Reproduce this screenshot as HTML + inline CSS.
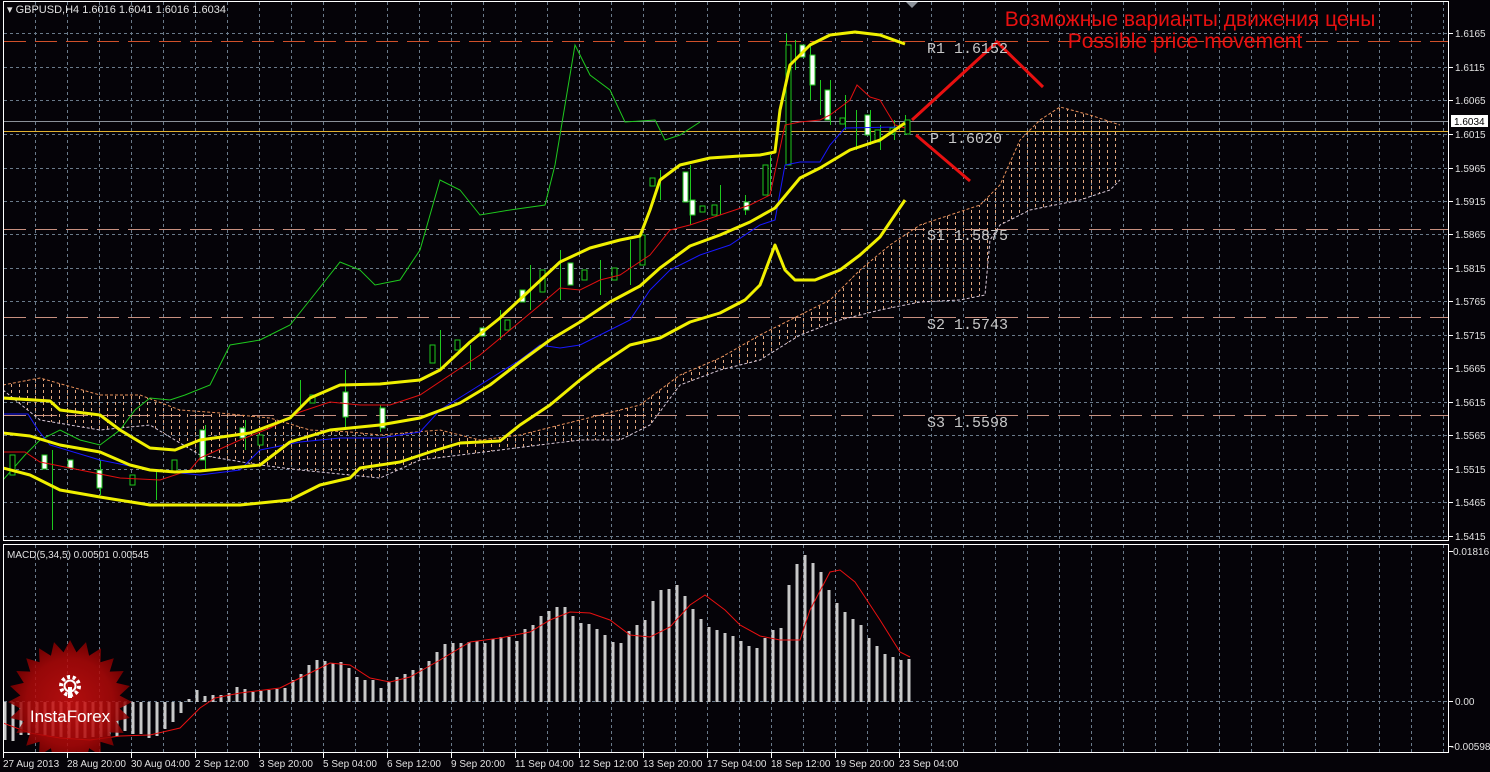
<!DOCTYPE html>
<html><head><meta charset="utf-8"><style>
html,body{margin:0;padding:0;background:#000;}
body{width:1490px;height:772px;overflow:hidden;}
svg{display:block;}
text{font-family:"Liberation Sans",sans-serif;}
text.mono{font-family:"Liberation Mono",monospace;}
</style></head><body>
<svg width="1490" height="772" viewBox="0 0 1490 772" xmlns="http://www.w3.org/2000/svg">
<defs>
<pattern id="hatch" width="8" height="6" patternUnits="userSpaceOnUse">
<rect x="3" y="0" width="1" height="3" fill="#e0a880"/>
</pattern>
<radialGradient id="lg" cx="0.5" cy="0.5" r="0.5">
<stop offset="0" stop-color="#d01010"/><stop offset="0.7" stop-color="#b00808"/><stop offset="1" stop-color="#800000"/>
</radialGradient>
<clipPath id="mainclip"><rect x="4" y="2" width="1444" height="538"/></clipPath>
<clipPath id="macdclip"><rect x="4" y="545" width="1444" height="207"/></clipPath>
</defs>
<rect width="1490" height="772" fill="#050308"/>
<g stroke="#6a7a8a" stroke-width="1" stroke-dasharray="3,3">
<path d="M4 33.5H1448M4 67.5H1448M4 100.5H1448M4 134.5H1448M4 168.5H1448M4 201.5H1448M4 234.5H1448M4 268.5H1448M4 301.5H1448M4 335.5H1448M4 368.5H1448M4 402.5H1448M4 435.5H1448M4 469.5H1448M4 502.5H1448M4 536.5H1448"/>
<path d="M4 701.5H1448"/>
<path d="M35.5 2V540M67.5 2V540M99.5 2V540M131.5 2V540M163.5 2V540M195.5 2V540M227.5 2V540M259.5 2V540M291.5 2V540M323.5 2V540M355.5 2V540M387.5 2V540M419.5 2V540M451.5 2V540M483.5 2V540M515.5 2V540M547.5 2V540M579.5 2V540M611.5 2V540M643.5 2V540M675.5 2V540M707.5 2V540M739.5 2V540M771.5 2V540M803.5 2V540M835.5 2V540M867.5 2V540M899.5 2V540M931.5 2V540M963.5 2V540M995.5 2V540M1027.5 2V540M1059.5 2V540M1091.5 2V540M1123.5 2V540M1155.5 2V540M1187.5 2V540M1219.5 2V540M1251.5 2V540M1283.5 2V540M1315.5 2V540M1347.5 2V540M1379.5 2V540M1411.5 2V540M1443.5 2V540"/>
<path d="M35.5 545V752M67.5 545V752M99.5 545V752M131.5 545V752M163.5 545V752M195.5 545V752M227.5 545V752M259.5 545V752M291.5 545V752M323.5 545V752M355.5 545V752M387.5 545V752M419.5 545V752M451.5 545V752M483.5 545V752M515.5 545V752M547.5 545V752M579.5 545V752M611.5 545V752M643.5 545V752M675.5 545V752M707.5 545V752M739.5 545V752M771.5 545V752M803.5 545V752M835.5 545V752M867.5 545V752M899.5 545V752M931.5 545V752M963.5 545V752M995.5 545V752M1027.5 545V752M1059.5 545V752M1091.5 545V752M1123.5 545V752M1155.5 545V752M1187.5 545V752M1219.5 545V752M1251.5 545V752M1283.5 545V752M1315.5 545V752M1347.5 545V752M1379.5 545V752M1411.5 545V752M1443.5 545V752"/>
</g>
<g clip-path="url(#mainclip)">
<g stroke-dasharray="22,9" stroke-width="1">
<path d="M4 41.5H1448" stroke="#d0502a"/>
<path d="M4 229.5H1448" stroke="#c89080"/>
<path d="M4 317.5H1448" stroke="#c89080"/>
<path d="M4 415.5H1448" stroke="#c89080"/>
</g>
<path d="M4 121.5H1448" stroke="#8a9098" stroke-width="1"/>
<path d="M4 131.5H1448" stroke="#e0b030" stroke-width="1"/>
<polygon fill="url(#hatch)" points="3,385 40,378 100,395 140,395 180,410 220,413 270,418 310,430 350,432 380,435 440,430 480,440 520,435 560,425 600,415 640,405 680,375 720,358 760,335 790,320 830,300 860,270 890,245 920,225 950,215 980,205 1000,185 1020,140 1040,120 1060,107 1090,115 1120,125 1120,180 1110,190 1080,200 1030,210 1000,225 990,240 985,295 960,300 920,302 880,310 840,320 800,335 760,360 720,370 680,385 650,425 620,440 580,440 540,445 500,450 460,455 420,460 380,478 350,475 300,470 260,465 200,455 150,425 100,430 40,420 3,390"/>
<polyline fill="none" stroke="#e8905a" stroke-width="1" stroke-dasharray="3,2" points="3,385 40,378 100,395 140,395 180,410 220,413 270,418 310,430 350,432 380,435 440,430 480,440 520,435 560,425 600,415 640,405 680,375 720,358 760,335 790,320 830,300 860,270 890,245 920,225 950,215 980,205 1000,185 1020,140 1040,120 1060,107 1090,115 1120,125"/>
<polyline fill="none" stroke="#d8c8d8" stroke-width="1" stroke-dasharray="3,2" points="3,390 40,420 100,430 150,425 200,455 260,465 300,470 350,475 380,478 420,460 460,455 500,450 540,445 580,440 620,440 650,425 680,385 720,370 760,360 800,335 840,320 880,310 920,302 960,300 985,295 990,240 1000,225 1030,210 1080,200 1110,190 1120,180"/>
<polyline fill="none" stroke="#1ec81e" stroke-width="1" points="3,480 25,455 40,440 60,430 80,440 100,445 120,430 135,410 150,398 170,400 185,395 210,385 230,345 260,340 290,325 310,300 340,262 360,270 375,285 400,280 420,250 440,180 460,190 480,215 510,210 545,205 555,165 575,45 590,75 610,90 625,122 655,120 665,140 680,135 700,122"/>
<g stroke="#1ec81e" stroke-width="1">
<path d="M52.5 450V530M100.5 460V495M156.5 470V500M205.5 425V470M245.5 420V450M300.5 380V410M345.5 370V430M380.5 405V432M440.5 330V370M470.5 345V370M500.5 310V340M530.5 265V310M560.5 250V300M600.5 260V295M630.5 240V285M660.5 170V200M690.5 165V225M720.5 185V215M745.5 195V215M770.5 155V190M786.5 33V160M795.5 40V70M810.5 45V100M820.5 80V115M830.5 80V125M845.5 95V130M856.5 110V150M870.5 110V145M880.5 125V150M894.5 120V140M905.5 115V135"/>
</g>
<g fill="#fff" stroke="#1ec81e" stroke-width="1">
<rect x="42" y="455" width="5" height="14"/><rect x="68" y="460" width="5" height="8"/><rect x="97" y="470" width="5" height="18"/><rect x="200" y="430" width="5" height="30"/><rect x="240" y="428" width="5" height="10"/><rect x="343" y="392" width="5" height="25"/><rect x="380" y="408" width="5" height="20"/><rect x="480" y="328" width="5" height="8"/><rect x="520" y="290" width="5" height="12"/><rect x="568" y="263" width="5" height="22"/><rect x="683" y="172" width="5" height="30"/><rect x="690" y="200" width="5" height="15"/><rect x="744" y="202" width="5" height="8"/><rect x="800" y="45" width="5" height="12"/><rect x="810" y="55" width="5" height="30"/><rect x="825" y="90" width="5" height="30"/><rect x="865" y="115" width="5" height="20"/>
</g>
<g fill="#000" stroke="#1ec81e" stroke-width="1">
<rect x="10" y="455" width="5" height="20"/><rect x="130" y="475" width="5" height="10"/><rect x="172" y="460" width="5" height="12"/><rect x="258" y="435" width="5" height="10"/><rect x="310" y="395" width="5" height="8"/><rect x="430" y="345" width="5" height="18"/><rect x="455" y="340" width="5" height="10"/><rect x="505" y="320" width="5" height="10"/><rect x="540" y="270" width="5" height="22"/><rect x="582" y="270" width="5" height="10"/><rect x="612" y="268" width="5" height="12"/><rect x="640" y="235" width="5" height="30"/><rect x="650" y="178" width="5" height="8"/><rect x="700" y="206" width="5" height="6"/><rect x="712" y="205" width="5" height="10"/><rect x="763" y="165" width="5" height="30"/><rect x="786" y="45" width="5" height="120"/><rect x="840" y="118" width="5" height="6"/><rect x="875" y="130" width="5" height="12"/><rect x="890" y="128" width="5" height="6"/><rect x="905" y="120" width="5" height="14"/>
</g>
<polyline fill="none" stroke="#1818ff" stroke-width="1" points="3,414 28,414 38,430 50,445 100,460 150,470 200,475 240,470 260,450 300,442 340,438 380,438 420,432 440,410 480,385 520,360 540,345 560,348 580,345 600,335 630,320 650,290 670,270 700,255 730,245 760,225 775,220 785,165 800,162 820,162 830,145 845,128 900,127"/>
<polyline fill="none" stroke="#e01010" stroke-width="1" points="3,452 25,452 40,462 80,470 120,478 160,480 190,470 200,458 240,440 270,428 300,412 330,402 360,405 390,405 420,395 450,375 480,355 510,330 540,305 560,288 580,290 600,280 620,275 650,255 670,230 690,225 720,215 750,205 770,195 785,125 800,122 820,120 830,115 850,100 857,85 870,97 880,100 895,125 905,128"/>
<g fill="none" stroke="#f0f000" stroke-width="3" stroke-linejoin="round">
<polyline points="3,398 50,401 60,410 100,415 120,430 150,448 175,450 200,440 250,433 290,418 310,398 340,385 380,384 420,380 440,370 470,342 500,318 530,290 560,262 590,248 620,240 640,236 650,210 660,180 680,165 710,158 740,156 760,155 775,152 780,110 790,65 810,45 830,35 855,32 880,35 905,44"/>
<polyline points="3,433 30,436 60,445 100,452 130,465 150,470 175,472 200,471 260,465 290,442 330,430 380,425 420,418 460,403 490,385 520,362 550,340 580,322 610,302 640,286 660,268 690,246 720,235 750,222 775,208 800,178 820,168 850,150 880,140 905,123"/>
<polyline points="3,468 30,475 60,490 100,497 150,505 200,505 240,505 290,500 320,485 350,478 360,468 400,462 430,452 460,443 500,441 520,425 550,405 580,380 600,365 630,345 660,338 690,322 720,313 745,300 760,285 775,245 785,270 795,280 815,280 840,270 860,255 880,237 905,200"/>
</g>
<g stroke="#e81010" stroke-width="3" fill="none">
<polyline points="912,120 997,42 1043,87"/>
<line x1="916" y1="135" x2="970" y2="181"/>
</g>
<g font-size="15" fill="#c8c8c8">
<text class="mono" x="927" y="53">R1 1.6152</text>
<text class="mono" x="930" y="143">P 1.6020</text>
<text class="mono" x="927" y="240">S1 1.5875</text>
<text class="mono" x="927" y="329">S2 1.5743</text>
<text class="mono" x="927" y="427">S3 1.5598</text>
</g>
<text x="1190" y="26" font-size="21" fill="#e81010" text-anchor="middle">Возможные варианты движения цены</text>
<text x="1185" y="48" font-size="21" fill="#e81010" text-anchor="middle">Possible price movement</text>
</g>
<polygon points="906,2 918,2 912,8" fill="#8a9098"/>
<g clip-path="url(#macdclip)">
<g stroke="#c8c8c8" stroke-width="3">
<path d="M5 702V740M13 702V741M21 702V735M29 702V735M37 702V733M45 702V735M53 702V736M61 702V737M69 702V738M77 702V738M85 702V738M93 702V737M101 702V737M109 702V736M117 702V736M125 702V731M133 702V734M141 702V734M149 702V738M157 702V736M165 702V729M173 702V722M181 702V713M189 702V699M197 702V690M205 702V696M213 702V695M221 702V695M229 702V693M237 702V687M245 702V689M253 702V692M261 702V691M269 702V690M277 702V689M285 702V688M293 702V680M301 702V674M309 702V665M317 702V660M325 702V661M333 702V663M341 702V662M349 702V668M357 702V677M365 702V680M373 702V680M381 702V688M389 702V682M397 702V677M405 702V674M413 702V670M421 702V668M429 702V661M437 702V652M445 702V644M453 702V643M461 702V643M469 702V642M477 702V641M485 702V643M493 702V639M501 702V637M509 702V637M517 702V641M525 702V629M533 702V625M541 702V616M549 702V611M557 702V607M565 702V607M573 702V616M581 702V623M589 702V624M597 702V629M605 702V635M613 702V642M621 702V643M629 702V631M637 702V625M645 702V620M653 702V601M661 702V590M669 702V589M677 702V585M685 702V596M693 702V609M701 702V619M709 702V627M717 702V630M725 702V633M733 702V636M741 702V641M749 702V646M757 702V648M765 702V638M773 702V630M781 702V628M789 702V585M797 702V564M805 702V555M813 702V563M821 702V572M829 702V590M837 702V603M845 702V612M853 702V619M861 702V625M869 702V638M877 702V646M885 702V654M893 702V657M901 702V660M909 702V659"/>
</g>
<polyline fill="none" stroke="#e81010" stroke-width="1" points="3,723 30,733 60,738 90,740 120,736 150,735 180,728 200,708 215,698 240,693 280,688 300,678 330,663 350,665 370,678 390,682 410,677 440,660 470,642 500,638 530,632 550,620 570,612 590,613 610,620 630,635 650,637 670,627 690,605 705,595 725,610 740,625 760,636 780,640 800,640 810,610 830,572 840,570 855,582 880,620 900,652 910,657"/>
<polygon fill="url(#lg)" opacity="0.85" points="132,702 119.6,708.5 129.9,718 116.2,721.1 123.7,733 109.7,732.4 113.8,745.8 100.4,741.7 101,755.7 89.1,748.2 86,761.9 76.5,751.6 70,764 63.5,751.6 54,761.9 50.9,748.2 39,755.7 39.6,741.7 26.2,745.8 30.3,732.4 16.3,733 23.8,721.1 10.1,718 20.4,708.5 8,702 20.4,695.5 10.1,686 23.8,682.9 16.3,671 30.3,671.6 26.2,658.2 39.6,662.3 39,648.3 50.9,655.8 54,642.1 63.5,652.4 70,640 76.5,652.4 86,642.1 89.1,655.8 101,648.3 100.4,662.3 113.8,658.2 109.7,671.6 123.7,671 116.2,682.9 129.9,686 119.6,695.5"/>
<g fill="#fff">
<circle cx="70" cy="686" r="9" fill="none" stroke="#fff" stroke-width="4" stroke-dasharray="3,2.6"/>
<circle cx="70" cy="686" r="5.5" fill="none" stroke="#fff" stroke-width="2"/>
<rect x="68" y="687" width="4" height="11"/>
</g>
<text x="70" y="722" font-size="17" fill="#fff" text-anchor="middle">InstaForex</text>
</g>
<text x="7" y="558" font-size="10" fill="#e0e0e0">MACD(5,34,5) 0.00501 0.00545</text>
<text x="7" y="13" font-size="11" fill="#e0e0e0">▾ GBPUSD,H4  1.6016 1.6041 1.6016 1.6034</text>
<g fill="none" stroke="#fff" stroke-width="1">
<rect x="3.5" y="1.5" width="1445" height="539"/>
<rect x="3.5" y="544.5" width="1445" height="208"/>
</g>
<g font-size="10" fill="#e0e0e0">
<text x="1455" y="37">1.6165</text><text x="1455" y="71">1.6115</text><text x="1455" y="104">1.6065</text><text x="1455" y="138">1.6015</text><text x="1455" y="172">1.5965</text><text x="1455" y="205">1.5915</text><text x="1455" y="238">1.5865</text><text x="1455" y="272">1.5815</text><text x="1455" y="305">1.5765</text><text x="1455" y="339">1.5715</text><text x="1455" y="372">1.5665</text><text x="1455" y="406">1.5615</text><text x="1455" y="439">1.5565</text><text x="1455" y="473">1.5515</text><text x="1455" y="506">1.5465</text><text x="1455" y="540">1.5415</text>
<text x="1453" y="555">0.01816</text><text x="1455" y="705">0.00</text><text x="1451" y="750">-0.00598</text>
</g>
<g stroke="#fff"><path d="M1449 33.5h4M1449 67.5h4M1449 100.5h4M1449 134.5h4M1449 168.5h4M1449 201.5h4M1449 234.5h4M1449 268.5h4M1449 301.5h4M1449 335.5h4M1449 368.5h4M1449 402.5h4M1449 435.5h4M1449 469.5h4M1449 502.5h4M1449 536.5h4M1449 551.5h4M1449 701.5h4M1449 746.5h4"/></g>
<rect x="1451" y="115" width="37" height="12" fill="#fff"/>
<text x="1454" y="125" font-size="10" fill="#000">1.6034</text>
<g stroke="#fff"><path d="M3.5 753v5M67.5 753v5M131.5 753v5M195.5 753v5M259.5 753v5M323.5 753v5M387.5 753v5M451.5 753v5M515.5 753v5M579.5 753v5M643.5 753v5M707.5 753v5M771.5 753v5M835.5 753v5M899.5 753v5"/></g>
<g font-size="10" fill="#e0e0e0">
<text x="3" y="767">27 Aug 2013</text><text x="67" y="767">28 Aug 20:00</text><text x="131" y="767">30 Aug 04:00</text><text x="195" y="767">2 Sep 12:00</text><text x="259" y="767">3 Sep 20:00</text><text x="323" y="767">5 Sep 04:00</text><text x="387" y="767">6 Sep 12:00</text><text x="451" y="767">9 Sep 20:00</text><text x="515" y="767">11 Sep 04:00</text><text x="579" y="767">12 Sep 12:00</text><text x="643" y="767">13 Sep 20:00</text><text x="707" y="767">17 Sep 04:00</text><text x="771" y="767">18 Sep 12:00</text><text x="835" y="767">19 Sep 20:00</text><text x="899" y="767">23 Sep 04:00</text>
</g>
</svg>
</body></html>
